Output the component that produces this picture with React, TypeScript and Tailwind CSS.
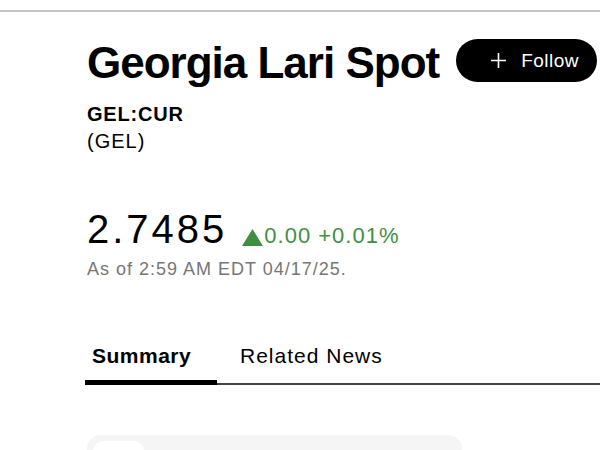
import { useState } from "react";

const font = { fontFamily: '"Liberation Sans", Arial, sans-serif' };

export default function App() {
  const [tab, setTab] = useState("summary");

  return (
    <div
      className="relative w-[600px] h-[450px] overflow-hidden bg-white text-black"
      style={font}
    >
      {/* top divider */}
      <div className="mt-[10px] h-[2px] bg-[#c4c4c4]" />

      <div className="pl-[87px]">
        {/* title row */}
        <div className="mt-[27px] flex items-start whitespace-nowrap">
          <h1 className="mt-[2px] text-[44px] font-bold leading-none tracking-[-1px]">
            Georgia Lari Spot
          </h1>
          <button className="ml-[17px] flex h-[43px] w-[141px] shrink-0 items-center rounded-full bg-black pl-[34px] text-white">
            <svg width="17" height="17" viewBox="0 0 17 17" className="shrink-0">
              <path d="M8.5 1v15M1 8.5h15" stroke="white" strokeWidth="1.6" />
            </svg>
            <span className="ml-[14px] text-[19px] leading-none tracking-[0.5px]">
              Follow
            </span>
          </button>
        </div>

        {/* ticker */}
        <div className="mt-[17px] text-[20px] font-bold leading-[24px] tracking-[0.8px]">
          GEL:CUR
        </div>
        <div className="mt-[3px] text-[20px] leading-[24px] tracking-[1px]">
          (GEL)
        </div>

        {/* price */}
        <div className="mt-[56px] flex items-baseline whitespace-nowrap">
          <span className="text-[40px] leading-none tracking-[3px]">2.7485</span>
          <span className="ml-[15px] flex items-baseline text-[22px] leading-none tracking-[1px] text-[#3f8f40]">
            <svg width="21" height="17" viewBox="0 0 21 17" className="self-end mb-[1px]">
              <path d="M10.5 0L21 17H0z" fill="#3f8f40" />
            </svg>
            <span className="ml-[1px]">0.00 +0.01%</span>
          </span>
        </div>
        <div className="mt-[11px] text-[18px] leading-none tracking-[1px] text-[#767676]">
          As of 2:59 AM EDT 04/17/25.
        </div>

        {/* tabs */}
        <div className="-ml-[2px] mt-[67px] flex items-start border-b-2 border-[#444]">
          <button
            onClick={() => setTab("summary")}
            className={`-mb-[2px] w-[132px] border-b-[5px] pl-[7px] pb-[14px] text-left text-[21px] leading-none ${
              tab === "summary"
                ? "border-black font-bold tracking-[0.5px]"
                : "border-transparent tracking-[1px]"
            }`}
          >
            Summary
          </button>
          <button
            onClick={() => setTab("news")}
            className={`-mb-[2px] ml-[23px] border-b-[5px] pb-[14px] text-left text-[21px] leading-none tracking-[1px] ${
              tab === "news" ? "border-black font-bold" : "border-transparent"
            }`}
          >
            Related News
          </button>
        </div>

        {/* summary card */}
        <div className="mt-[50px] h-[60px] w-[375px] rounded-[14px] bg-[#f5f5f5] px-[6px] pt-[6px]">
          <div className="h-[40px] w-[51px] rounded-[10px] bg-white" />
        </div>
      </div>
    </div>
  );
}
